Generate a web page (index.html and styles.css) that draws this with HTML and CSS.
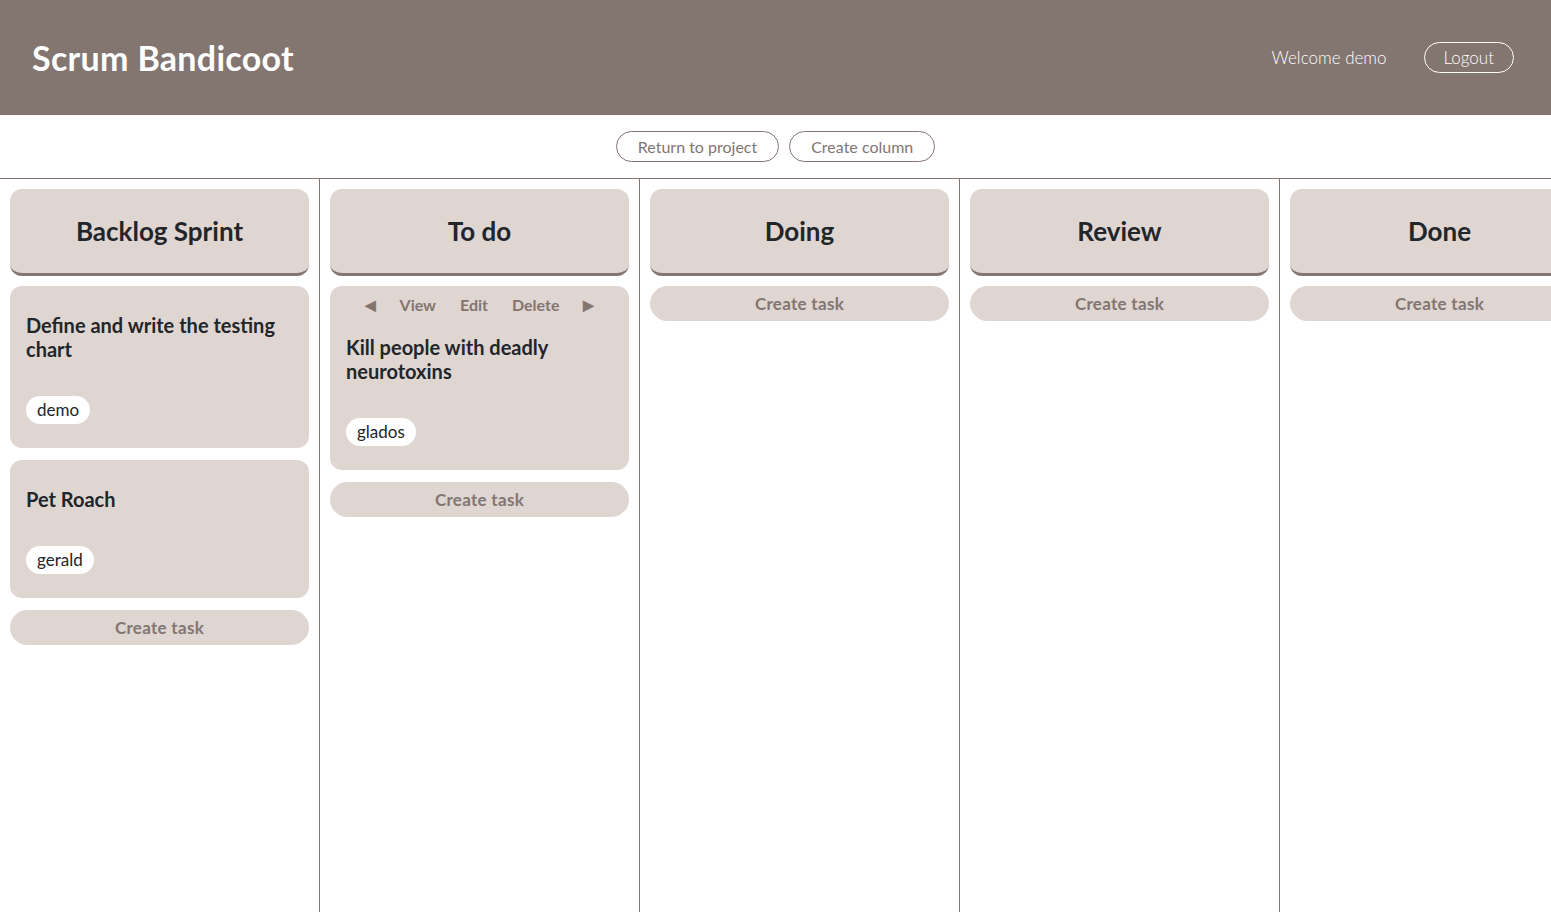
FILE: index.html
```html
<!DOCTYPE html>
<html lang="en">
    <head>
        <meta charset="UTF-8">
        <meta name="viewport" content="width=device-width, initial-scale=1.0">
        <title>Scrum Bandicoot</title>
        <link rel="stylesheet" href="styles.css">
    </head>
    <body>
        <div class="header">
            <div class="brand">Scrum Bandicoot</div>
            <div class="user">
                <span class="welcome">Welcome demo</span>
                <button class="outline-btn light">Logout</button>
            </div>
        </div>

        <div class="toolbar">
            <button class="outline-btn">Return to project</button>
            <button class="outline-btn">Create column</button>
        </div>

        <div class="board">
            <div class="column">
                <div class="column-title">Backlog Sprint</div>
                <div class="card">
                    <div class="card-title">Define and write the testing chart</div>
                    <span class="tag">demo</span>
                </div>
                <div class="card">
                    <div class="card-title">Pet Roach</div>
                    <span class="tag">gerald</span>
                </div>
                <button class="create-task">Create task</button>
            </div>

            <div class="column">
                <div class="column-title">To do</div>
                <div class="card">
                    <div class="card-actions">
                        <span class="arrow">&#9664;</span>
                        <span>View</span>
                        <span>Edit</span>
                        <span>Delete</span>
                        <span class="arrow">&#9654;</span>
                    </div>
                    <div class="card-title">Kill people with deadly neurotoxins</div>
                    <span class="tag">glados</span>
                </div>
                <button class="create-task">Create task</button>
            </div>

            <div class="column">
                <div class="column-title">Doing</div>
                <button class="create-task">Create task</button>
            </div>

            <div class="column">
                <div class="column-title">Review</div>
                <button class="create-task">Create task</button>
            </div>

            <div class="column">
                <div class="column-title">Done</div>
                <button class="create-task">Create task</button>
            </div>
        </div>
    </body>
</html>
```

FILE: styles.css
```css
body {
    margin: 0;
    font-family: "Lato", "Noto Sans", sans-serif;
    color: #22262a;
    overflow: hidden;
}

button {
    font-family: inherit;
    cursor: pointer;
}

.header {
    height: 115px;
    background-color: #837570;
    display: flex;
    align-items: center;
    justify-content: space-between;
    padding: 0 37px 0 32px;
    box-sizing: border-box;
}

.brand {
    color: white;
    font-size: 34px;
    font-weight: 700;
    letter-spacing: 0.3px;
}

.user {
    display: flex;
    align-items: center;
    gap: 37px;
}

.welcome {
    color: white;
    font-size: 17px;
    font-weight: 300;
}

.outline-btn {
    background: transparent;
    border: 1px solid #837570;
    color: #837570;
    border-radius: 16px;
    height: 31px;
    padding: 0 21px;
    font-size: 16px;
    font-weight: 400;
}

.outline-btn.light {
    border-color: white;
    color: white;
    padding: 0 19px;
    font-size: 17px;
    font-weight: 300;
}

.toolbar {
    height: 64px;
    display: flex;
    justify-content: center;
    align-items: flex-start;
    gap: 10px;
    padding-top: 16px;
    box-sizing: border-box;
    border-bottom: 1px solid #837570;
}

.board {
    display: flex;
    height: calc(100vh - 179px);
}

.column {
    flex: 0 0 299px;
    padding: 10px;
    border-right: 1px solid #837570;
    display: flex;
    flex-direction: column;
}

.column-title {
    background-color: #dfd6d2;
    border-radius: 12px;
    border-bottom: 3px solid #837570;
    height: 84px;
    display: flex;
    align-items: center;
    justify-content: center;
    font-size: 26px;
    font-weight: 700;
    margin-bottom: 10px;
}

.card {
    background-color: #dfd6d2;
    border-radius: 12px;
    padding: 27px 16px 24px;
    margin-bottom: 12px;
}

.card-actions {
    display: flex;
    justify-content: center;
    align-items: center;
    gap: 24px;
    height: 34px;
    margin: -26px 0 14px;
    color: #837570;
    font-size: 16px;
    font-weight: 700;
}

.arrow {
    font-size: 14px;
}

.card-title {
    font-size: 20px;
    font-weight: 700;
    line-height: 24px;
    margin-bottom: 35px;
}

.tag {
    display: inline-block;
    background-color: white;
    border-radius: 15px;
    height: 28px;
    line-height: 28px;
    padding: 0 11px;
    font-size: 17px;
    font-weight: 400;
    vertical-align: top;
}

.create-task {
    background-color: #dfd6d2;
    border: none;
    border-radius: 18px;
    height: 35px;
    color: #837570;
    font-size: 17px;
    font-weight: 700;
    letter-spacing: 0.3px;
}
```
